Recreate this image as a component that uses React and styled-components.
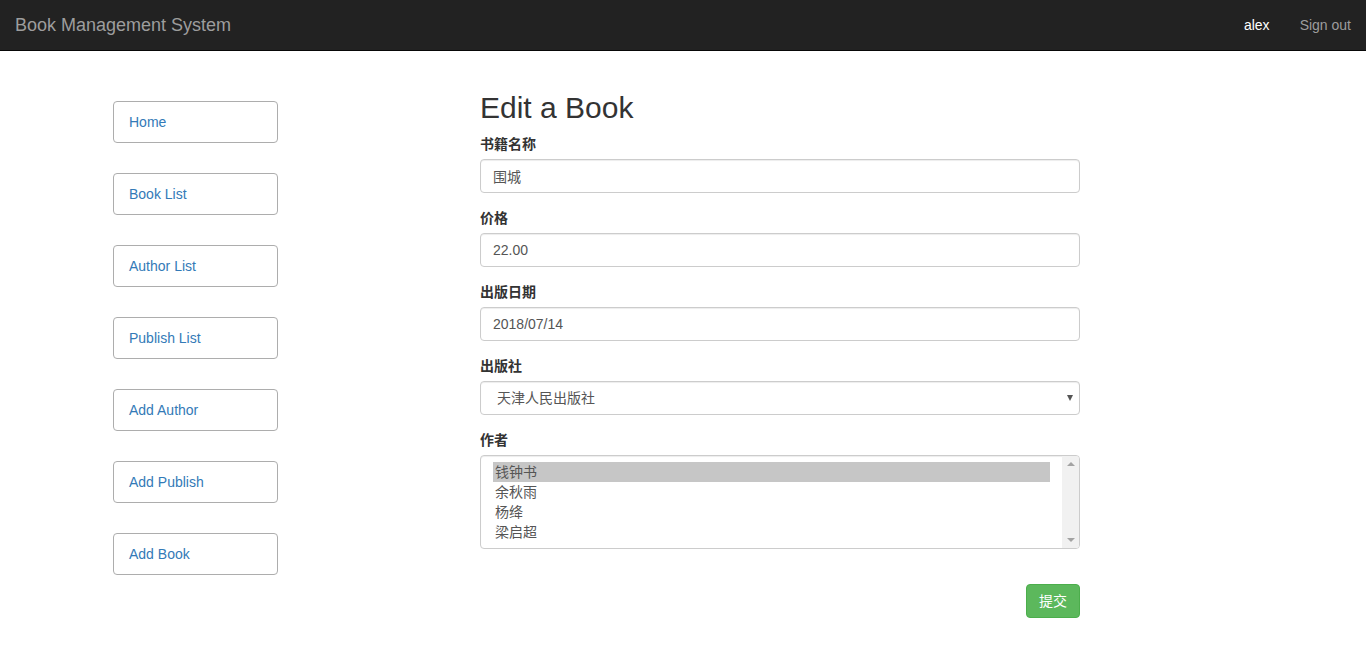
import React from 'react';
import styled, { createGlobalStyle } from 'styled-components';

const GlobalStyle = createGlobalStyle`
  html, body {
    margin: 0;
    padding: 0;
    background: #fff;
  }

  body {
    font-family: "Liberation Sans", Arial, "Noto Sans CJK SC", sans-serif;
    font-size: 14px;
    line-height: 1.42857;
    color: #333;
  }

  * {
    box-sizing: border-box;
  }
`;

const Navbar = styled.nav`
  display: flex;
  align-items: center;
  justify-content: space-between;
  height: 51px;
  background: #222;
  border-bottom: 1px solid #080808;
`;

const Brand = styled.a`
  padding: 15px;
  font-size: 18px;
  line-height: 20px;
  color: #9d9d9d;
  text-decoration: none;
`;

const NavLinks = styled.div`
  display: flex;
`;

const NavLink = styled.a`
  padding: 15px;
  line-height: 20px;
  color: ${(p) => (p.$active ? '#fff' : '#9d9d9d')};
  text-decoration: none;
`;

const Container = styled.div`
  width: 1170px;
  margin: 0 auto;
  padding: 40px 15px 0;
  display: grid;
  grid-template-columns: 165px 600px;
  column-gap: 202px;
  align-items: start;
`;

const Sidebar = styled.ul`
  list-style: none;
  margin: 10px 0 0;
  padding: 0;
  display: flex;
  flex-direction: column;
  gap: 30px;
`;

const SideButton = styled.a`
  display: block;
  height: 42px;
  padding: 10px 15px;
  line-height: 20px;
  border: 1px solid #adadad;
  border-radius: 4px;
  color: #337ab7;
  text-decoration: none;
`;

const Main = styled.main``;

const Title = styled.h2`
  margin: 0 0 10px;
  font-size: 30px;
  font-weight: 500;
  line-height: 33px;
  color: #333;
`;

const FormGroup = styled.div`
  margin-bottom: 15px;
`;

const Label = styled.label`
  display: block;
  margin-bottom: 5px;
  font-weight: bold;
  line-height: 20px;
  font-family: "Liberation Sans", "Noto Sans CJK SC", sans-serif;
`;

const Input = styled.input`
  display: block;
  width: 100%;
  height: 34px;
  padding: 6px 12px;
  font-family: "Liberation Sans", "Noto Sans CJK SC", sans-serif;
  font-size: 14px;
  line-height: 20px;
  color: #555;
  background: #fff;
  border: 1px solid #ccc;
  border-radius: 4px;
  box-shadow: inset 0 1px 1px rgba(0, 0, 0, 0.075);
  outline: none;
`;

const SelectWrap = styled.div`
  position: relative;

  &::after {
    content: '';
    position: absolute;
    right: 7px;
    top: 14px;
    border-left: 3px solid transparent;
    border-right: 3px solid transparent;
    border-top: 6px solid #555;
  }
`;

const Select = styled.select`
  display: block;
  width: 100%;
  height: 34px;
  padding: 6px 12px 6px 16px;
  font-family: "Liberation Sans", "Noto Sans CJK SC", sans-serif;
  font-size: 14px;
  color: #555;
  background: #fff;
  border: 1px solid #ccc;
  border-radius: 4px;
  box-shadow: inset 0 1px 1px rgba(0, 0, 0, 0.075);
  appearance: none;
  outline: none;
`;

const ListBox = styled.div`
  display: flex;
  height: 94px;
  border: 1px solid #ccc;
  border-radius: 4px;
  box-shadow: inset 0 1px 1px rgba(0, 0, 0, 0.075);
  overflow: hidden;
`;

const Options = styled.div`
  flex: 1;
  padding: 6px 12px;
`;

const Option = styled.div`
  height: 20px;
  padding: 0 2px;
  line-height: 20px;
  font-family: "Liberation Sans", "Noto Sans CJK SC", sans-serif;
  color: #555;
  background: ${(p) => (p.$selected ? '#c6c6c6' : 'transparent')};
`;

const ScrollTrack = styled.div`
  width: 17px;
  background: #f1f1f1;
  display: flex;
  flex-direction: column;
  justify-content: space-between;
  align-items: center;
  padding: 6px 0;
`;

const Arrow = styled.span`
  width: 0;
  height: 0;
  border-left: 4px solid transparent;
  border-right: 4px solid transparent;
  ${(p) => (p.$up ? 'border-bottom: 4px solid #a3a3a3;' : 'border-top: 4px solid #a3a3a3;')}
`;

const Actions = styled.div`
  display: flex;
  justify-content: flex-end;
  margin-top: 35px;
`;

const SubmitButton = styled.button`
  height: 34px;
  padding: 6px 12px;
  font-family: "Liberation Sans", "Noto Sans CJK SC", sans-serif;
  font-size: 14px;
  line-height: 20px;
  color: #fff;
  background: #5cb85c;
  border: 1px solid #4cae4c;
  border-radius: 4px;
`;

const links = ['Home', 'Book List', 'Author List', 'Publish List', 'Add Author', 'Add Publish', 'Add Book'];
const authors = ['钱钟书', '余秋雨', '杨绛', '梁启超'];

export default function App () {
  return (
    <>
      <GlobalStyle />
      <Navbar>
        <Brand href='#'>Book Management System</Brand>
        <NavLinks>
          <NavLink $active href='#'>alex</NavLink>
          <NavLink href='#'>Sign out</NavLink>
        </NavLinks>
      </Navbar>
      <Container>
        <Sidebar>
          {links.map((l) => (
            <li key={l}><SideButton href='#'>{l}</SideButton></li>
          ))}
        </Sidebar>
        <Main>
          <Title>Edit a Book</Title>
          <form onSubmit={(e) => e.preventDefault()}>
            <FormGroup>
              <Label>书籍名称</Label>
              <Input type='text' defaultValue='围城' />
            </FormGroup>
            <FormGroup>
              <Label>价格</Label>
              <Input type='text' defaultValue='22.00' />
            </FormGroup>
            <FormGroup>
              <Label>出版日期</Label>
              <Input type='text' defaultValue='2018/07/14' />
            </FormGroup>
            <FormGroup>
              <Label>出版社</Label>
              <SelectWrap>
                <Select defaultValue='1'>
                  <option value='1'>天津人民出版社</option>
                </Select>
              </SelectWrap>
            </FormGroup>
            <FormGroup>
              <Label>作者</Label>
              <ListBox>
                <Options>
                  {authors.map((a, i) => (
                    <Option key={a} $selected={i === 0}>{a}</Option>
                  ))}
                </Options>
                <ScrollTrack>
                  <Arrow $up />
                  <Arrow />
                </ScrollTrack>
              </ListBox>
            </FormGroup>
            <Actions>
              <SubmitButton type='submit'>提交</SubmitButton>
            </Actions>
          </form>
        </Main>
      </Container>
    </>
  );
}
